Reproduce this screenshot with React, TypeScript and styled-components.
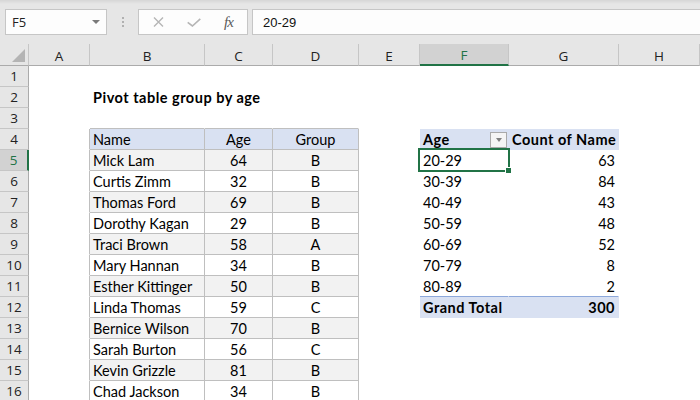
import React from 'react';
import styled, { createGlobalStyle } from 'styled-components';

const palette = {
  chrome: '#e6e6e6',
  chromeActive: '#d2d2d2',
  chromeLine: '#c6c6c6',
  chromeEdge: '#ababab',
  box: '#fdfdfd',
  boxLine: '#c6c6c6',
  green: '#217346',
  tableLine: '#bfbfbf',
  tableHead: '#d9e1f2',
  band: '#f2f2f2',
  pivotLine: '#8ea9db',
};

const GlobalStyle = createGlobalStyle`
  html, body {
    margin: 0;
    padding: 0;
    background: #fff;
    overflow: hidden;
  }
`;

const Page = styled.div`
  width: 700px;
  height: 400px;
  overflow: hidden;
  background: #fff;
  font-family: 'Lato', 'Liberation Sans', sans-serif;
`;

const Toolbar = styled.div`
  display: flex;
  align-items: center;
  height: 44px;
  padding-left: 5px;
  box-sizing: border-box;
  background: linear-gradient(#d6d6d6 0, ${palette.chrome} 4px);
`;

const Box = styled.div`
  display: flex;
  align-items: center;
  height: 26px;
  box-sizing: border-box;
  background: ${palette.box};
  border: 1px solid ${palette.boxLine};
`;

const NameBox = styled(Box)`
  width: 102px;
  padding: 0 6px;
  justify-content: space-between;
  font-family: 'Open Sans', sans-serif;
  font-size: 13px;
  color: #222;
`;

const Caret = styled.span`
  width: 0;
  height: 0;
  border-left: 4px solid transparent;
  border-right: 4px solid transparent;
  border-top: 4px solid #7a7a7a;
`;

const Grip = styled.div`
  display: flex;
  flex-direction: column;
  gap: 2px;
  margin: 0 14px 0 15px;

  span {
    width: 2px;
    height: 2px;
    background: #b0b0b0;
  }
`;

const FormulaButtons = styled(Box)`
  width: 110px;
  padding-left: 14px;
  gap: 23px;
`;

const FxLabel = styled.span`
  font-family: 'Liberation Serif', serif;
  font-style: italic;
  font-size: 15px;
  color: #5a5a5a;
  letter-spacing: -1px;
`;

const FormulaInput = styled(Box)`
  flex: 1;
  margin: 0 -2px 0 4px;
  padding-left: 10px;
  font-family: 'Liberation Sans', sans-serif;
  font-size: 13px;
  color: #111;
`;

const Sheet = styled.div`
  display: grid;
  grid-template-columns: 29px 61px 115px 68px 86px 61px 89px 110px 1fr;
  grid-template-rows: 22px;
  grid-auto-rows: 21px;
  background: #fff;
`;

const HeadBase = styled.div<{ $active?: boolean }>`
  display: flex;
  align-items: center;
  justify-content: center;
  box-sizing: border-box;
  background: ${(p) => (p.$active ? palette.chromeActive : palette.chrome)};
  color: ${(p) => (p.$active ? palette.green : '#222')};
  font-family: 'Open Sans', sans-serif;
  font-size: 13.5px;
`;

const Corner = styled(HeadBase)`
  justify-content: flex-end;
  align-items: flex-end;
  padding: 0 3px 3px 0;
  border-right: 1px solid ${palette.chromeLine};
  border-bottom: 1px solid ${palette.chromeEdge};
`;

const ColHead = styled(HeadBase)`
  padding-top: 2px;
  border-right: 1px solid ${palette.chromeLine};
  border-bottom: ${(p) => (p.$active ? `2px solid ${palette.green}` : `1px solid ${palette.chromeEdge}`)};
`;

const RowHead = styled(HeadBase)`
  border-bottom: 1px solid ${palette.chromeLine};
  border-right: ${(p) => (p.$active ? `2px solid ${palette.green}` : `1px solid ${palette.chromeEdge}`)};
`;

type Align = 'left' | 'center' | 'right';

const Cell = styled.div<{
  $bg?: string;
  $right?: string;
  $bottom?: string;
  $align?: Align;
  $bold?: boolean;
}>`
  position: relative;
  display: flex;
  align-items: center;
  justify-content: ${(p) =>
    p.$align === 'center' ? 'center' : p.$align === 'right' ? 'flex-end' : 'space-between'};
  box-sizing: border-box;
  padding: 1px 3px 0 3px;
  white-space: nowrap;
  overflow: visible;
  background: ${(p) => p.$bg ?? 'transparent'};
  border-right: 1px solid ${(p) => p.$right ?? 'transparent'};
  border-bottom: 1px solid ${(p) => p.$bottom ?? 'transparent'};
  font-size: 14.5px;
  font-weight: ${(p) => (p.$bold ? 700 : 400)};
  letter-spacing: ${(p) => (p.$bold ? '0.5px' : 'normal')};
  color: #000;
`;

const FilterButton = styled.span`
  display: flex;
  align-items: center;
  justify-content: center;
  width: 17px;
  height: 16px;
  margin-right: -2px;
  box-sizing: border-box;
  background: #f4f4f4;
  border: 1px solid #a9a9a9;

  &::after {
    content: '';
    border-left: 3.5px solid transparent;
    border-right: 3.5px solid transparent;
    border-top: 4px solid #7f7f7f;
  }
`;

const Selection = styled.div`
  position: absolute;
  left: -2px;
  top: -2px;
  right: -2px;
  bottom: -2px;
  border: 2px solid ${palette.green};
  pointer-events: none;
`;

const FillHandle = styled.span`
  position: absolute;
  right: -4px;
  bottom: -4px;
  width: 5px;
  height: 5px;
  background: ${palette.green};
  border: 1px solid #fff;
`;

const COLUMNS = ['A', 'B', 'C', 'D', 'E', 'F', 'G', 'H'];
const ROW_COUNT = 16;
const ACTIVE = { row: 5, col: 5 };

const people: [string, number, string][] = [
  ['Mick Lam', 64, 'B'],
  ['Curtis Zimm', 32, 'B'],
  ['Thomas Ford', 69, 'B'],
  ['Dorothy Kagan', 29, 'B'],
  ['Traci Brown', 58, 'A'],
  ['Mary Hannan', 34, 'B'],
  ['Esther Kittinger', 50, 'B'],
  ['Linda Thomas', 59, 'C'],
  ['Bernice Wilson', 70, 'B'],
  ['Sarah Burton', 56, 'C'],
  ['Kevin Grizzle', 81, 'B'],
  ['Chad Jackson', 34, 'B'],
];

const ageGroups: [string, number][] = [
  ['20-29', 63],
  ['30-39', 84],
  ['40-49', 43],
  ['50-59', 48],
  ['60-69', 52],
  ['70-79', 8],
  ['80-89', 2],
];

type Kind = 'empty' | 'title' | 'tableHead' | 'tableBody' | 'pivotHead' | 'pivotBody' | 'pivotTotal';

type CellInfo = {
  kind: Kind;
  text?: string;
  align?: Align;
  bold?: boolean;
  filter?: boolean;
};

// row is 1-based like Excel, col 0 = A
const cellAt = (row: number, col: number): CellInfo => {
  if (row === 2 && col === 1) return { kind: 'title', text: 'Pivot table group by age', bold: true };

  if (col >= 1 && col <= 3) {
    if (row === 4) {
      return { kind: 'tableHead', text: ['Name', 'Age', 'Group'][col - 1], align: col === 1 ? 'left' : 'center' };
    }
    const person = people[row - 5];
    if (person) {
      return { kind: 'tableBody', text: String(person[col - 1]), align: col === 1 ? 'left' : 'center' };
    }
  }

  if (col === 5 || col === 6) {
    if (row === 4) {
      return col === 5
        ? { kind: 'pivotHead', text: 'Age', bold: true, filter: true }
        : { kind: 'pivotHead', text: 'Count of Name', bold: true };
    }
    const group = ageGroups[row - 5];
    if (group) {
      return col === 5
        ? { kind: 'pivotBody', text: group[0] }
        : { kind: 'pivotBody', text: String(group[1]), align: 'right' };
    }
    if (row === 12) {
      return col === 5
        ? { kind: 'pivotTotal', text: 'Grand Total', bold: true }
        : { kind: 'pivotTotal', text: '300', bold: true, align: 'right' };
    }
  }

  return { kind: 'empty' };
};

const isTable = (row: number, col: number) => {
  const kind = cellAt(row, col).kind;
  return kind === 'tableHead' || kind === 'tableBody';
};

const backgroundFor = (info: CellInfo, row: number) => {
  switch (info.kind) {
    case 'tableHead':
    case 'pivotHead':
    case 'pivotTotal':
      return palette.tableHead;
    case 'tableBody':
      return row % 2 === 1 ? palette.band : '#fff';
    default:
      return undefined;
  }
};

const CancelIcon = () => (
  <svg width="11" height="10" viewBox="0 0 11 10">
    <path d="M1 0.5 L10 9.5 M10 0.5 L1 9.5" stroke="#b5b5b5" strokeWidth="1.4" fill="none" />
  </svg>
);

const EnterIcon = () => (
  <svg width="14" height="9" viewBox="0 0 14 9">
    <path d="M0.7 4.3 L5.4 8 L13.3 0.8" stroke="#b5b5b5" strokeWidth="1.6" fill="none" />
  </svg>
);

const CornerMark = () => (
  <svg width="13" height="13" viewBox="0 0 13 13">
    <polygon points="13,0 13,13 0,13" fill="#b4b4b4" />
  </svg>
);

const App = () => {
  const rows = Array.from({ length: ROW_COUNT }, (_, i) => i + 1);

  return (
    <Page>
      <GlobalStyle />
      <Toolbar>
        <NameBox>
          <span>F5</span>
          <Caret />
        </NameBox>
        <Grip>
          <span />
          <span />
          <span />
        </Grip>
        <FormulaButtons>
          <CancelIcon />
          <EnterIcon />
          <FxLabel>fx</FxLabel>
        </FormulaButtons>
        <FormulaInput>20-29</FormulaInput>
      </Toolbar>

      <Sheet>
        <Corner>
          <CornerMark />
        </Corner>
        {COLUMNS.map((letter, col) => (
          <ColHead key={letter} $active={col === ACTIVE.col}>
            {letter}
          </ColHead>
        ))}

        {rows.map((row) => (
          <React.Fragment key={row}>
            <RowHead $active={row === ACTIVE.row}>{row}</RowHead>
            {COLUMNS.map((letter, col) => {
              const info = cellAt(row, col);
              const right = isTable(row, col) || isTable(row, col + 1) ? palette.tableLine : undefined;
              const below = cellAt(row + 1, col).kind;
              const bottom =
                isTable(row, col) || isTable(row + 1, col)
                  ? palette.tableLine
                  : below === 'pivotTotal'
                    ? palette.pivotLine
                    : undefined;
              const selected = row === ACTIVE.row && col === ACTIVE.col;

              return (
                <Cell
                  key={letter}
                  $bg={backgroundFor(info, row)}
                  $right={right}
                  $bottom={bottom}
                  $align={info.align}
                  $bold={info.bold}
                >
                  {info.text}
                  {info.filter && <FilterButton />}
                  {selected && (
                    <Selection>
                      <FillHandle />
                    </Selection>
                  )}
                </Cell>
              );
            })}
          </React.Fragment>
        ))}
      </Sheet>
    </Page>
  );
};

export default App;
